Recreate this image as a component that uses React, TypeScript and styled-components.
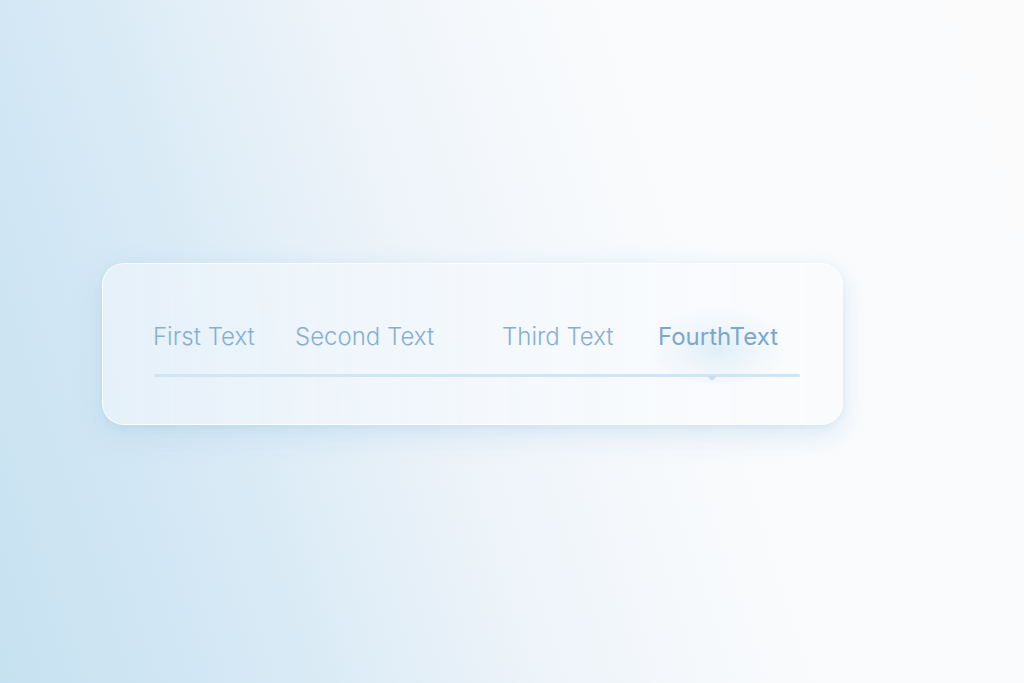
import React from 'react';
import styled, { createGlobalStyle } from 'styled-components';

const GlobalStyle = createGlobalStyle`
  html, body {
    margin: 0;
    padding: 0;
  }
  body {
    font-family: Inter, "Noto Sans", sans-serif;
  }
`

const Page = styled.div`
  width: 1024px;
  height: 683px;
  overflow: hidden;
  box-sizing: border-box;
  padding-top: 263px;
  padding-left: 102px;
  background: linear-gradient(72deg, #c6e1f1 0%, #d6e9f5 22%, #eaf2f9 40%, #f5f8fb 55%, #fafbfc 70%, #fbfbfc 100%);
`

const Card = styled.div`
  width: 741px;
  height: 162px;
  box-sizing: border-box;
  padding: 58px 44px 0 50px;
  border-radius: 22px;
  background: linear-gradient(90deg, rgba(232, 242, 250, 0.85) 0%, rgba(244, 248, 252, 0.9) 50%, rgba(250, 251, 253, 0.92) 100%);
  border: 1.5px solid rgba(255, 255, 255, 0.8);
  box-shadow: 0 10px 28px rgba(150, 196, 228, 0.3), 0 2px 6px rgba(170, 205, 232, 0.22);
`

const Tabs = styled.div`
  display: flex;
  align-items: flex-end;
  height: 30px;
`

const Tab = styled.div<{ $width?: number; $active?: boolean }>`
  position: relative;
  flex: ${p => (p.$width ? `0 0 ${p.$width}px` : '1 1 auto')};
  font-size: 24px;
  line-height: 30px;
  font-weight: ${p => (p.$active ? 400 : 300)};
  color: ${p => (p.$active ? '#7aa8cd' : '#86b0d2')};
  white-space: nowrap;
`

const Glow = styled.span`
  position: absolute;
  left: -10px;
  top: -14px;
  width: 140px;
  height: 76px;
  border-radius: 50%;
  background: radial-gradient(ellipse at 50% 55%, rgba(196, 225, 245, 0.45) 0%, rgba(214, 234, 248, 0.2) 45%, rgba(220, 236, 248, 0) 72%);
  z-index: 0;
`

const Label = styled.span`
  position: relative;
  z-index: 1;
`

const Track = styled.div`
  position: relative;
  margin-top: 22px;
  margin-left: 1px;
  width: 646px;
  height: 3px;
  border-radius: 2px;
  background: #d0e5f3;
`

const Notch = styled.span`
  position: absolute;
  left: 553px;
  top: 2px;
  width: 0;
  height: 0;
  border-left: 5px solid transparent;
  border-right: 5px solid transparent;
  border-top: 5px solid #c5def0;
`

const tabs = [
  { label: 'First Text', width: 142 },
  { label: 'Second Text', width: 207 },
  { label: 'Third Text', width: 156 },
  { label: 'FourthText', active: true },
]

const App = () => {
  return (
    <>
      <GlobalStyle />
      <Page>
        <Card>
          <Tabs>
            {tabs.map(t => (
              <Tab key={t.label} $width={t.width} $active={t.active}>
                {t.active && <Glow />}
                <Label>{t.label}</Label>
              </Tab>
            ))}
          </Tabs>
          <Track>
            <Notch />
          </Track>
        </Card>
      </Page>
    </>
  )
}

export default App;
